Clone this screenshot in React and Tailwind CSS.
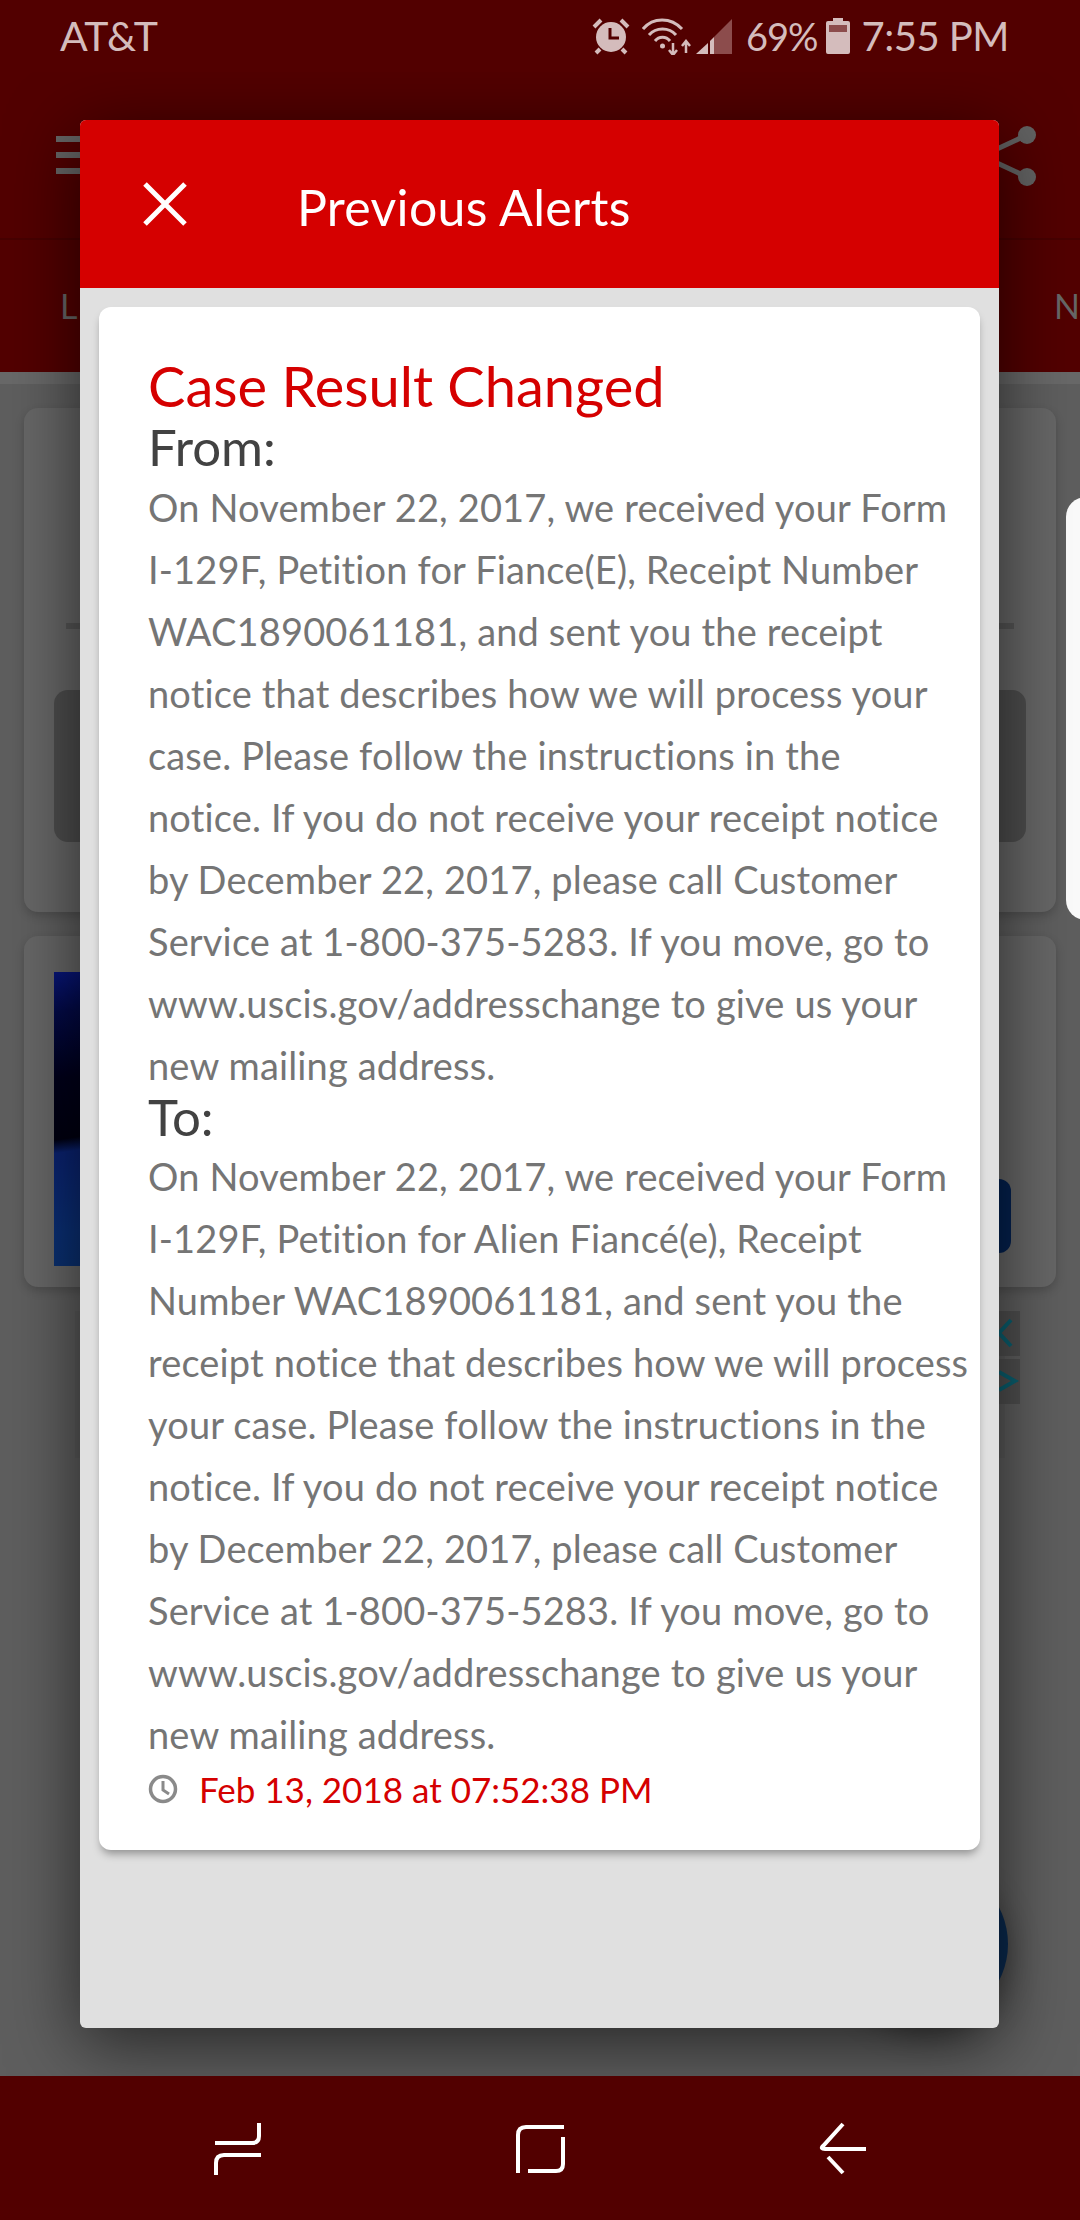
const fromLines = [
  'On November 22, 2017, we received your Form',
  'I-129F, Petition for Fiance(E), Receipt Number',
  'WAC1890061181, and sent you the receipt',
  'notice that describes how we will process your',
  'case. Please follow the instructions in the',
  'notice. If you do not receive your receipt notice',
  'by December 22, 2017, please call Customer',
  'Service at 1-800-375-5283. If you move, go to',
  'www.uscis.gov/addresschange to give us your',
  'new mailing address.',
];

const toLines = [
  'On November 22, 2017, we received your Form',
  'I-129F, Petition for Alien Fiancé(e), Receipt',
  'Number WAC1890061181, and sent you the',
  'receipt notice that describes how we will process',
  'your case. Please follow the instructions in the',
  'notice. If you do not receive your receipt notice',
  'by December 22, 2017, please call Customer',
  'Service at 1-800-375-5283. If you move, go to',
  'www.uscis.gov/addresschange to give us your',
  'new mailing address.',
];

const Body = ({ lines }) => (
  <p className="text-[38px] leading-[62px] text-[#757575] tracking-[0.15px]">
    {lines.map((line, idx) => (
      <span key={idx} className="block whitespace-nowrap">{line}</span>
    ))}
  </p>
);

const StatusBar = () => (
  <div className="relative z-10 h-[72px] flex items-center justify-between pl-[60px] pr-[71px] bg-[#520000] text-[#d4bcbc] text-[40px]">
    <span className="text-[41px] tracking-[-0.5px]">AT&amp;T</span>
    <div className="flex items-center">
      {/* alarm */}
      <svg width="38" height="38" viewBox="0 0 38 38" className="mr-[12px]">
        <circle cx="19" cy="20" r="15" fill="#d4bcbc" />
        <path d="M2 10 L9 3 M36 10 L29 3" stroke="#d4bcbc" strokeWidth="4" />
        <path d="M8 32 L4 36 M30 32 L34 36" stroke="#d4bcbc" strokeWidth="4" />
        <path d="M18 11 V21 H27" stroke="#520000" strokeWidth="3" fill="none" />
      </svg>
      {/* wifi */}
      <svg width="50" height="38" viewBox="0 0 50 38" fill="none" stroke="#d4bcbc" strokeWidth="3" className="mr-[4px]">
        <path d="M1 12 C11 0 29 0 40 12" />
        <path d="M7 18 C14 10 27 10 34 18" />
        <path d="M13 24 C17 19 24 19 28 24" />
        <circle cx="20.5" cy="29" r="2.5" fill="#d4bcbc" stroke="none" />
        <path d="M31 26 V38 M27 33 L31 38 L35 33 M44 36 V24 M40 29 L44 24 L48 29" strokeWidth="2.5" />
      </svg>
      {/* signal */}
      <svg width="36" height="36" viewBox="0 0 36 36" className="mr-[14px]">
        <path d="M0 36 L12 25 V36 Z" fill="#d4bcbc" />
        <path d="M14 23 L18 19 V36 H14 Z" fill="#d4bcbc" />
        <path d="M18 36 V19 L36 1 V36 Z" fill="#8c4c4c" />
      </svg>
      <span className="text-[38px] tracking-[-1px] mr-[8px]">69%</span>
      {/* battery */}
      <svg width="24" height="36" viewBox="0 0 24 36" className="mr-[12px]">
        <path d="M7 0 H17 V3 H22 Q24 3 24 5 V34 Q24 36 22 36 H2 Q0 36 0 34 V5 Q0 3 2 3 H7 Z" fill="#d4bcbc" />
        <rect x="3" y="7" width="18" height="7" fill="#8c4c4c" />
      </svg>
      <span className="tracking-[-0.5px]">7:55 PM</span>
    </div>
  </div>
);

const AppBar = () => (
  <div className="bg-[#520000] h-[300px] flex flex-col">
    <div className="h-[168px] border-b-2 border-[#470000] flex items-start justify-between pt-[64px] pl-[56px] pr-[44px]">
      <div className="flex flex-col gap-[10px] w-[28px]">
        <div className="h-[6px] bg-[#666666]" />
        <div className="h-[6px] bg-[#666666]" />
        <div className="h-[6px] bg-[#666666]" />
      </div>
      <svg width="60" height="60" viewBox="0 0 60 60" className="-mt-[10px]">
        <path d="M51 9 L6 30 L51 51" stroke="#636363" strokeWidth="5" fill="none" />
        <circle cx="51" cy="9" r="9" fill="#636363" />
        <circle cx="51" cy="51" r="9" fill="#636363" />
      </svg>
    </div>
    <div className="flex-1 flex justify-between pl-[60px] pt-[44px] text-[#666666] text-[34px] leading-[44px]">
      <span>L</span>
      <span className="w-[26px]">N</span>
    </div>
  </div>
);

const Background = () => (
  <div className="flex-1 bg-[#5e5e5e] overflow-hidden">
    <div className="h-[12px] bg-[#686868]" />
    <div className="px-[24px] pt-[24px] flex flex-col gap-[24px]">
      <div className="h-[504px] rounded-[14px] bg-[#666666] shadow-[0_4px_10px_rgba(0,0,0,0.18)] pt-[215px]">
        <div className="mx-[42px] h-[6px] bg-[#555555]" />
        <div className="mx-[30px] mt-[61px] h-[152px] rounded-[14px] bg-[#4d4d4d]" />
      </div>
      <div className="h-[351px] rounded-[14px] bg-[#666666] shadow-[0_4px_10px_rgba(0,0,0,0.18)] pt-[36px] px-[30px] flex justify-between items-start">
        <div className="w-[300px] h-[294px] bg-[linear-gradient(172deg,#08167a_0%,#030a48_12%,#00001a_32%,#000010_50%,#0a2270_54%,#0a2f74_78%,#0a3070_88%,#061a70_100%)]" />
        <div className="w-[200px] h-[74px] mt-[207px] mr-[15px] rounded-[12px] bg-[#04214f]" />
      </div>
      <div className="ml-[51px] mr-[51px] h-[147px] flex justify-end bg-[#5a5a5a]">
        <div className="w-[30px] -mr-[15px] flex flex-col gap-[3px]">
          <svg width="30" height="45" viewBox="0 0 30 45" className="bg-[#4f4f4f]">
            <path d="M21 9 L9 22 L21 35" stroke="#0a6070" strokeWidth="4" fill="none" />
          </svg>
          <svg width="30" height="45" viewBox="0 0 30 45" className="bg-[#4f4f4f]">
            <path d="M9 13 L25 22 L9 31" stroke="#0a6070" strokeWidth="4" fill="none" />
          </svg>
        </div>
      </div>
    </div>
  </div>
);

const NavBar = () => (
  <div className="relative z-10 h-[144px] bg-[#520000]">
    <svg width="1080" height="144" viewBox="0 2076 1080 144" fill="none" stroke="#ffffff" strokeWidth="4">
      {/* recent */}
      <path d="M215 2143 H252 Q259 2143 259 2136 V2123" />
      <path d="M261 2155 H224 Q216 2155 216 2163 V2175" />
      {/* home */}
      <path d="M564 2127 H526 Q518 2127 518 2135 V2173" />
      <path d="M528 2171 H556 Q563 2171 563 2164 V2137" />
      {/* back */}
      <path d="M843 2124 L823 2146 Q820 2149 825 2149 H866" />
      <path d="M828 2157 L843 2173" />
    </svg>
  </div>
);

const App = () => {
  return (
    <div className="relative w-[1080px] h-[2220px] overflow-hidden flex flex-col [font-family:Lato,sans-serif]">
      <StatusBar />
      <AppBar />
      <Background />
      <NavBar />

      {/* white sheet peeking at the right */}
      <div className="absolute left-[1066px] top-[497px] w-[40px] h-[423px] rounded-[20px] bg-[#fafafa]" />

      {/* fab */}
      <div className="absolute left-[848px] top-[1864px] w-[160px] h-[160px] rounded-full bg-[#0a2a4f] shadow-[0_10px_30px_rgba(0,0,0,0.35)]" />

      {/* dialog */}
      <div className="absolute left-[80px] top-[120px] w-[919px] h-[1908px] rounded-[6px] bg-[#e0e0e0] shadow-[0_16px_70px_rgba(0,0,0,0.6)] overflow-hidden">
        <div className="h-[168px] bg-[#d50000] flex items-center text-white">
          <svg width="44" height="44" viewBox="0 0 44 44" className="ml-[63px]" fill="none" stroke="#ffffff" strokeWidth="5">
            <path d="M2 2 L42 42 M42 2 L2 42" />
          </svg>
          <span className="ml-[110px] mt-[5px] text-[50px] leading-none tracking-[0.3px]">Previous Alerts</span>
        </div>
        <div className="mx-[19px] mt-[19px] h-[1543px] rounded-[12px] bg-white shadow-[0_6px_8px_-2px_rgba(0,0,0,0.35)] pl-[49px] pt-[46px]">
          <h2 className="text-[56px] leading-[65px] text-[#d50000]">Case Result Changed</h2>
          <h3 className="text-[51px] leading-[58px] text-[#424242]">From:</h3>
          <Body lines={fromLines} />
          <h3 className="-mt-[7px] text-[51px] leading-[56px] text-[#424242]">To:</h3>
          <Body lines={toLines} />
          <div className="flex items-center gap-[21px] -mt-[1px]">
            <svg width="30" height="30" viewBox="0 0 30 30" fill="none" stroke="#8a8a8a" strokeWidth="3.5">
              <circle cx="15" cy="15" r="12.5" />
              <path d="M15 7 V16 L21 20" strokeWidth="3" />
            </svg>
            <span className="text-[35px] leading-[50px] text-[#d50000]">Feb 13, 2018 at 07:52:38 PM</span>
          </div>
        </div>
      </div>
    </div>
  );
};

export default App;
